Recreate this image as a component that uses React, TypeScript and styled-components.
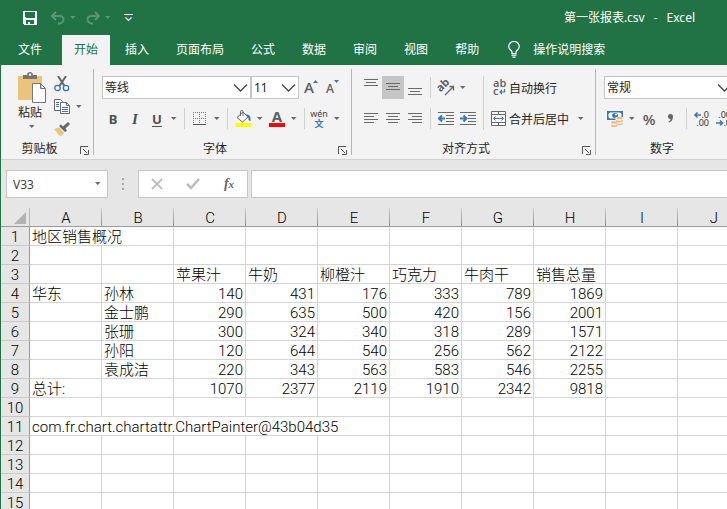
import React from "react";
import styled, { createGlobalStyle } from "styled-components";

const GREEN = "#217346";
const LINE = "#c6c6c6";
const INK = "#262626";
const ICON = "#5f5f5f";
const BLUE = "#3b78b5";
const UI_FONT = `"Noto Sans", "Noto Sans CJK SC", sans-serif`;
const CELL_FONT = `Roboto, "Noto Sans CJK SC", sans-serif`;

const GlobalStyle = createGlobalStyle`
  *, *::before, *::after { box-sizing: border-box; }
  body { margin: 0; background: #fff; font-family: ${UI_FONT}; font-size: 12px; color: ${INK}; }
  button, input, select { font: inherit; color: inherit; margin: 0; }
  svg { display: block; flex: none; }
`;

const Window = styled.div`
  display: flex;
  flex-direction: column;
  height: 100vh;
  overflow: hidden;
  border-left: 1px solid ${GREEN};
`;

/* ---------- Title bar and tabs ---------- */

const TitleBar = styled.header`
  display: flex;
  align-items: center;
  flex: none;
  height: 35px;
  padding: 0 32px 0 18px;
  background: ${GREEN};
  color: #fff;
`;

const BareButton = styled.button`
  display: flex;
  align-items: center;
  justify-content: center;
  border: 0;
  padding: 0;
  background: transparent;
`;

const QuickTools = styled.div`
  display: flex;
  gap: 6px;
`;

const QuickPair = styled.div`
  display: flex;
  color: #579774;
`;

const QuickButton = styled(BareButton)<{ $narrow?: boolean }>`
  width: ${(p) => (p.$narrow ? 7 : 22)}px;
  height: 24px;
`;

const DocumentTitle = styled.h1`
  display: flex;
  gap: 9px;
  margin: 0 0 0 auto;
  font-size: 12px;
  line-height: 16px;
  font-weight: 400;
  white-space: nowrap;
`;

const TabStrip = styled.nav`
  display: flex;
  flex: none;
  gap: 3px;
  height: 30px;
  padding-left: 5px;
  background: ${GREEN};
  color: #fff;
`;

const Tab = styled.button<{ $active?: boolean; $file?: boolean }>`
  flex: none;
  border: 0;
  margin-right: ${(p) => (p.$file ? 5 : 0)}px;
  padding: 0 12px 3px;
  white-space: nowrap;
  background: ${(p) => (p.$active ? "#f3f3f3" : "transparent")};
  color: ${(p) => (p.$active ? GREEN : "#fff")};
`;

const TellMe = styled(BareButton)`
  gap: 13px;
  margin-left: 14px;
  padding-bottom: 2px;
  white-space: nowrap;
  color: #fff;
`;

/* ---------- Ribbon ---------- */

const Ribbon = styled.section`
  display: flex;
  flex: none;
  height: 95px;
  overflow: hidden;
  background: #f3f3f3;
  border-bottom: 1px solid #d2d2d2;
`;

const Group = styled.div`
  display: flex;
  flex: none;
  flex-direction: column;
`;

const GroupDivider = styled.div`
  flex: none;
  width: 1px;
  margin: 4px 0;
  background: #b5b5b5;
`;

const GroupBody = styled.div`
  display: flex;
  height: 65px;
  padding: 11px 8px 0;
`;

const GroupFooter = styled.div`
  display: flex;
  align-items: center;
  margin-top: 10px;
  height: 18px;
`;

const GroupLabel = styled.span`
  flex: 1;
  text-align: center;
  line-height: 18px;
`;

const Launcher = styled(BareButton)`
  width: 15px;
  height: 18px;
  padding: 3px 2px 0 0;
`;

const Rows = styled.div`
  display: flex;
  flex-direction: column;
  gap: 8px;
`;

const Row = styled.div`
  display: flex;
  align-items: center;
  height: 23px;
`;

const Tool = styled(BareButton)<{ $pressed?: boolean }>`
  flex: none;
  width: 22px;
  height: 23px;
  background: ${(p) => (p.$pressed ? "#c5c5c5" : "transparent")};
`;

const LabelledTool = styled(BareButton)`
  flex: none;
  height: 23px;
  gap: 3px;
  padding-left: 3px;
  white-space: nowrap;
`;

const CaretButton = styled(BareButton)<{ $push?: boolean }>`
  flex: none;
  width: 12px;
  height: 23px;
  justify-content: flex-start;
  padding-left: 2px;
  margin-left: ${(p) => (p.$push ? 6 : 0)}px;
`;

const Separator = styled.div<{ $tall?: boolean }>`
  flex: none;
  width: 1px;
  height: ${(p) => (p.$tall ? 54 : 21)}px;
  margin: 0 4px;
  background: #d0d0d0;
`;

const Glyph = styled.span<{ $italic?: boolean; $underline?: boolean }>`
  font-family: ${(p) => (p.$italic ? `"Liberation Serif", serif` : UI_FONT)};
  font-size: ${(p) => (p.$italic ? 15 : 13)}px;
  line-height: 16px;
  font-weight: 700;
  font-style: ${(p) => (p.$italic ? "italic" : "normal")};
  text-decoration: ${(p) => (p.$underline ? "underline" : "none")};
  text-underline-offset: 2px;
  color: #505050;
`;

const PasteColumn = styled.div`
  display: flex;
  flex: none;
  margin-top: -4px;
`;

const PasteButton = styled(BareButton)`
  flex-direction: column;
  align-items: flex-end;
  justify-content: flex-start;
  width: 42px;
  height: 62px;
  padding-right: 5px;
`;

const PasteLabel = styled.span`
  margin: 1px 4px 3px 0;
  line-height: 18px;
`;

const PasteCaret = styled.span`
  margin-right: 11px;
`;

const ClipTools = styled.div`
  display: flex;
  flex-direction: column;
  width: 34px;
`;

const SelectBox = styled.div<{ $width: number }>`
  display: grid;
  flex: none;
  align-items: center;
  width: ${(p) => p.$width}px;
  height: 23px;
  border: 1px solid ${LINE};
  background: #fff;
  & > * { grid-area: 1 / 1; }
  & > svg { justify-self: end; margin-right: 2px; pointer-events: none; }
`;

const SelectField = styled.select`
  appearance: none;
  width: 100%;
  height: 21px;
  border: 0;
  padding: 0 20px 0 2px;
  background: transparent;
`;

/* ---------- Formula bar ---------- */

const FormulaBar = styled.section`
  display: flex;
  flex: none;
  align-items: flex-start;
  height: 48px;
  padding: 10px 0 0 5px;
  background: #e6e6e6;
`;

const NameBox = styled.div`
  display: flex;
  flex: none;
  align-items: center;
  width: 102px;
  height: 28px;
  border: 1px solid ${LINE};
  background: #fff;
`;

const NameInput = styled.input`
  flex: 1;
  min-width: 0;
  border: 0;
  padding: 0 0 0 6px;
  background: transparent;
  color: #444;
`;

const NameCaret = styled(BareButton)`
  width: 18px;
  height: 26px;
  padding-right: 2px;
`;

const Grip = styled.div`
  display: flex;
  flex: none;
  flex-direction: column;
  align-items: center;
  justify-content: center;
  gap: 3px;
  width: 30px;
  height: 28px;
`;

const GripDot = styled.span`
  width: 2px;
  height: 2px;
  background: #a6a6a6;
`;

const FormulaButtons = styled.div`
  display: flex;
  flex: none;
  width: 110px;
  height: 28px;
  margin-right: 3px;
  border: 1px solid ${LINE};
  background: #fff;
`;

const FormulaButton = styled(BareButton)`
  flex: 1;
`;

const FormulaInput = styled.input`
  flex: 1;
  min-width: 0;
  height: 28px;
  border: 1px solid ${LINE};
  border-right: 0;
  padding: 0 6px;
  background: #fff;
`;

/* ---------- Sheet ---------- */

const SheetArea = styled.main`
  flex: 1;
  min-height: 0;
  overflow: hidden;
  background: #fff;
`;

const Sheet = styled.table`
  table-layout: fixed;
  width: 749px;
  border-collapse: separate;
  border-spacing: 0;
  font-family: ${CELL_FONT};
  font-size: 15px;
  font-weight: 300;
  line-height: 15px;
  color: #000;
`;

const HeadCol = styled.col`
  width: 29px;
`;

const DataCol = styled.col`
  width: 72px;
`;

const SheetRow = styled.tr`
  height: 19px;
`;

const Corner = styled.td`
  height: 19px;
  padding: 0;
  background: #e6e6e6;
  border-bottom: 1px solid #9b9b9b;
  border-right: 1px solid #b5b5b5;
`;

const CornerMark = styled.svg`
  margin: 2px 3px 0 auto;
`;

const ColumnHead = styled.th`
  height: 19px;
  padding: 3px 0 0;
  font-weight: 300;
  text-align: center;
  background: linear-gradient(#c8c8c8, #8f8f8f) right / 1px 100% no-repeat #e6e6e6;
  border-bottom: 1px solid #9b9b9b;
`;

const RowHead = styled.th`
  height: 19px;
  padding: 3px 0 0;
  font-weight: 300;
  text-align: center;
  background: #e6e6e6;
  border-right: 1px solid #9b9b9b;
  border-bottom: 1px solid #c9c9c9;
`;

const Cell = styled.td<{ $numeric?: boolean }>`
  height: 19px;
  padding: 3px 2px 0;
  white-space: nowrap;
  text-align: ${(p) => (p.$numeric ? "right" : "left")};
  border-right: 1px solid #d4d4d4;
  border-bottom: 1px solid #d4d4d4;
`;

/* ---------- Icons ---------- */

const Caret = ({ color = "#6a6a6a" }: { color?: string }) => (
  <svg width="7" height="4" viewBox="0 0 7 4">
    <path d="M1 0h5.500L3.750 3z" fill={color} />
  </svg>
);

const Chevron = () => (
  <svg width="15" height="10" viewBox="0 0 15 10" fill="none" stroke="#444" strokeWidth="1.300">
    <path d="M1 1.500l6.500 6.500L14 1.500" />
  </svg>
);

const LauncherIcon = () => (
  <svg width="9" height="9" viewBox="0 0 9 9" fill="none" stroke="#555">
    <path d="M.5 8V.5H8M3 3l4 4M8.500 4v4.500H4" />
  </svg>
);

const SaveIcon = () => (
  <svg width="14" height="14" viewBox="0 0 14 14" shapeRendering="crispEdges">
    <path fill="#fff" fillRule="evenodd" d="M0 0h14v14H1l-1-1zM2 1v5l1 1h8l1-1V1zM3 9v4h2v-2h2v2h4V9z" />
  </svg>
);

const UndoIcon = () => (
  <svg width="16" height="14" viewBox="0 0 16 14" fill="none" stroke="currentColor" strokeWidth="2">
    <path d="M6 1L2 5l4 4M2 5h7.500c2.500 0 4 1.500 4 3.500S12 12 9.500 12.500H8" />
  </svg>
);

const RedoIcon = () => (
  <svg width="16" height="14" viewBox="0 0 16 14" fill="none" stroke="currentColor" strokeWidth="2">
    <path d="M10 1l4 4-4 4M14 5H6.500C4 5 2.500 6.500 2.500 8.500S4 12 6.500 12.500H8" />
  </svg>
);

const CustomizeIcon = () => (
  <svg width="9" height="8" viewBox="0 0 9 8" fill="none" stroke="#fff">
    <path d="M0 .5h9M1.500 3.500l3 3 3-3" strokeWidth="1.200" />
  </svg>
);

const BulbIcon = () => (
  <svg width="12" height="17" viewBox="0 0 12 17" fill="none" stroke="#fff" strokeWidth="1.200">
    <path d="M4 12.500V11C3.500 9 .7 8.500 .7 5.500a5.300 5 0 0 1 10.600 0C11.300 8.500 8.500 9 8 11v1.500zM3.500 14.200h5M4.500 16.200h3" />
  </svg>
);

const PasteIcon = () => (
  <svg width="28" height="31" viewBox="0 0 28 31">
    <path fill="#ecc37c" d="M0 4h24v24H0z" />
    <path fill="#757575" d="M5 3h4c0-4 6-4 6 0h4v4H5z" />
    <circle cx="12" cy="2.800" r="1.200" fill="#f3f3f3" />
    <path fill="#fff" stroke="#777" d="M14.500 11.500h8l5 5v14h-13zM22.500 11.500v5h5" />
  </svg>
);

const CutIcon = () => (
  <svg width="16" height="16" viewBox="0 0 16 16" fill="none">
    <path d="M4 0l6.500 10M12 0L5.500 10" stroke="#666" strokeWidth="2" />
    <circle cx="3.500" cy="12" r="2.700" stroke={BLUE} strokeWidth="1.300" />
    <circle cx="12" cy="12" r="2.700" stroke={BLUE} strokeWidth="1.300" />
  </svg>
);

const CopyIcon = () => (
  <svg width="16" height="15" viewBox="0 0 16 15" fill="#fff" stroke="#6a6a6a">
    <path d="M.5 .5h6l2 2v9h-8z" />
    <path d="M2 3.500h3M2 5.500h3M2 7.500h3" stroke={BLUE} />
    <path d="M6.500 3.500h6l3 3v8h-9zM12.500 3.500v3h3" />
    <path d="M8 8.500h6M8 10.500h6M8 12.500h6" stroke={BLUE} />
  </svg>
);

const BrushIcon = () => (
  <svg width="16" height="15" viewBox="0 0 16 15">
    <path fill="#ecc37c" d="M0 7l5-1.500 5 5L7 14.500 5 13z" />
    <path fill="#666" d="M5 4l2-1.500 2 2L14 0l2 2-4.500 4.500 1.500 2L11 10z" />
  </svg>
);

const BordersIcon = () => (
  <svg width="14" height="14" viewBox="0 0 14 14" stroke="#777" fill="none" shapeRendering="crispEdges">
    <path strokeDasharray="1 1" d="M0 .5h13M.5 0v13M12.500 0v13M6.500 0v13M0 6.500h13" />
    <path stroke="#555" d="M0 12.500h13" />
  </svg>
);

const FillIcon = () => (
  <svg width="16" height="17" viewBox="0 0 16 17">
    <path fill="#fff" stroke="#666" d="M2 7.500L8 2l5 5-5.500 5z" />
    <path fill="none" stroke="#666" d="M5.500 6V1.500c0-1.500 2.500-1.500 2.500 0V6" />
    <path fill={BLUE} d="M10.500 4.500c4-.5 5.500 1.500 5 6.500-1.500 0-2.500-1-2-3z" />
    <path fill="#ff0" d="M0 13h16v4H0z" />
  </svg>
);

const FontColorIcon = () => (
  <svg width="16" height="23" viewBox="0 0 16 23">
    <text x="8" y="15" textAnchor="middle" fontFamily="Noto Sans" fontWeight="700" fontSize="15" fill={ICON}>A</text>
    <path fill="#f00" d="M0 16h16v4H0z" />
  </svg>
);

const GrowIcon = ({ shrink = false }: { shrink?: boolean }) => (
  <svg width="16" height="23" viewBox="0 0 16 23" overflow="visible">
    <text x="2" y="17" fontFamily="Open Sans" fontWeight="600" fontSize={shrink ? 12 : 15} fill={ICON}>A</text>
    <path fill={BLUE} d={shrink ? "M10 4h5l-2.500 3z" : "M11 7h5l-2.500-3z"} />
  </svg>
);

const PhoneticIcon = () => (
  <svg width="20" height="23" viewBox="0 0 20 23">
    <text x="9" y="10" textAnchor="middle" fontFamily="Noto Sans" fontSize="9" fill="#444">wén</text>
    <text x="9" y="20" textAnchor="middle" fontFamily="Noto Sans CJK SC" fontWeight="700" fontSize="9" fill={BLUE}>文</text>
  </svg>
);

const Lines = ({ d, height = 17 }: { d: string; height?: number }) => (
  <svg width="14" height={height} viewBox={`0 0 14 ${height}`} stroke="#6a6a6a" fill="none">
    <path d={d} />
  </svg>
);

const OrientationIcon = () => (
  <svg width="17" height="16" viewBox="0 0 17 16" overflow="visible">
    <text x="2" y="11" transform="rotate(-45 4 11)" fontFamily="Noto Sans" fontWeight="700" fontSize="11" fill={ICON}>ab</text>
    <path fill="none" stroke="#666" strokeWidth="1.300" d="M7 15l8.500-8.500M11.500 6.500h4v4" />
  </svg>
);

const IndentIcon = ({ increase = false }: { increase?: boolean }) => (
  <svg width="16" height="13" viewBox="0 0 16 13" fill="none">
    <path stroke="#6a6a6a" d="M0 .5h16M8 3.500h8M8 6.500h8M8 9.500h8M0 12.500h16" />
    <path stroke={BLUE} strokeWidth="2" d={increase ? "M0 6.500h6M3.500 3.500l3 3-3 3" : "M1 6.500h6M4 3.500l-3 3 3 3"} />
  </svg>
);

const WrapIcon = () => (
  <svg width="15" height="19" viewBox="0 0 15 19" overflow="visible">
    <text x="2" y="9" fontFamily="Open Sans" fontWeight="600" fontSize="11" fill={ICON}>ab</text>
    <text x="2" y="17" fontFamily="Open Sans" fontWeight="600" fontSize="11" fill={ICON}>c</text>
    <path fill="none" stroke={BLUE} strokeWidth="1.200" d="M13.500 11v3H9M11 12l-2 2 2 2" />
  </svg>
);

const MergeIcon = () => (
  <svg width="15" height="15" viewBox="0 0 15 15" fill="#fff" stroke="#666">
    <path d="M.5 .5h14v14H.5zM.5 3.500h14M.5 11.500h14M7.500 .5v3M7.500 11.500v3" />
    <path fill="none" stroke={BLUE} d="M2.500 7.500h10M4.500 5.500l-2 2 2 2M10.500 5.500l2 2-2 2" />
  </svg>
);

const CurrencyIcon = () => (
  <svg width="16" height="17" viewBox="0 0 16 17">
    <path fill={BLUE} d="M0 1h16v9H0z" />
    <path fill="#fff" d="M3 2.500h10l1.500 1.500v3L13 8.500H3L1.500 7V4z" />
    <ellipse cx="8" cy="5.500" rx="3" ry="2.500" fill={BLUE} />
    <circle cx="9" cy="4.500" r="1" fill="#fff" />
    <path fill="#f3f3f3" d="M8.500 7H16v10H3v-6h5.500z" />
    <g fill="#ecbd7e">
      <ellipse cx="12.500" cy="8" rx="3.300" ry="1.300" />
      <path d="M9 10c1 1 6 1 7 0v1.500c-1 1.300-6 1.300-7 0zM9 13c1 1 6 1 7 0v1c-1 1.300-6 1.300-7 0z" />
      <ellipse cx="7" cy="12.500" rx="3" ry="1.200" />
      <path d="M4 14.500c1 1 5 1 6.500 0V16c-1.500 1.300-5.500 1.300-6.500 0z" />
    </g>
  </svg>
);

const DecimalIcon = ({ decrease = false }: { decrease?: boolean }) => (
  <svg width="16" height="18" viewBox="0 0 16 18" overflow="visible">
    <g fontFamily="Noto Sans" fontSize="9" fill="#333">
      <text x="15" y="8" textAnchor="end">{decrease ? ".00" : ".0"}</text>
      <text x="15" y="16" textAnchor="end">{decrease ? ".0" : ".00"}</text>
    </g>
    <path
      fill="none"
      stroke={BLUE}
      strokeWidth="1.600"
      d={decrease ? "M0 13h6M4 10.500L6.500 13 4 15.500" : "M1 5h6M3.500 2.500L1 5l2.500 2.500"}
    />
  </svg>
);

const CommaIcon = () => (
  <svg width="6" height="9" viewBox="0 0 6 9">
    <path fill="#666" d="M0 2.500A2.500 2.500 0 0 1 5 2.500C5 6 3.500 7.500 1 8.500L.5 7.500C2 6.800 2.500 6 2.500 5A2.500 2.500 0 0 1 0 2.500z" />
  </svg>
);

const CancelIcon = () => (
  <svg width="12" height="12" viewBox="0 0 12 12" stroke="#bdbdbd" strokeWidth="1.800">
    <path d="M1 1l10 10M11 1L1 11" />
  </svg>
);

const EnterIcon = () => (
  <svg width="14" height="12" viewBox="0 0 14 12" fill="none" stroke="#bdbdbd" strokeWidth="2.500">
    <path d="M1 6l4 4 8-9" />
  </svg>
);

const FormulaMark = styled.span`
  font-family: "Liberation Serif", serif;
  font-size: 14px;
  line-height: 18px;
  font-weight: 700;
  font-style: italic;
  color: #666;
`;

const FormulaMarkSmall = styled.small`
  font-size: 11px;
`;

/* ---------- Data ---------- */

const TABS = ["文件", "开始", "插入", "页面布局", "公式", "数据", "审阅", "视图", "帮助"];
const COLUMNS = ["A", "B", "C", "D", "E", "F", "G", "H", "I", "J"];

type Value = string | number;

const ROWS: Record<number, Value[]> = {
  1: ["地区销售概况"],
  3: ["", "", "苹果汁", "牛奶", "柳橙汁", "巧克力", "牛肉干", "销售总量"],
  4: ["华东", "孙林", 140, 431, 176, 333, 789, 1869],
  5: ["", "金士鹏", 290, 635, 500, 420, 156, 2001],
  6: ["", "张珊", 300, 324, 340, 318, 289, 1571],
  7: ["", "孙阳", 120, 644, 540, 256, 562, 2122],
  8: ["", "袁成洁", 220, 343, 563, 583, 546, 2255],
  9: ["总计:", "", 1070, 2377, 2119, 1910, 2342, 9818],
  11: ["com.fr.chart.chartattr.ChartPainter@43b04d35"],
};

/* How many columns a long first cell runs across. */
const SPANS: Record<number, number> = { 1: 2, 11: 5 };
const ROW_NUMBERS = Array.from({ length: 15 }, (_, i) => i + 1);

const SplitCaret = ({ label, push }: { label: string; push?: boolean }) => (
  <CaretButton aria-label={label} $push={push}>
    <Caret />
  </CaretButton>
);

const Footer = ({ label }: { label: string }) => (
  <GroupFooter>
    <GroupLabel>{label}</GroupLabel>
    <Launcher aria-label={`${label}设置`}>
      <LauncherIcon />
    </Launcher>
  </GroupFooter>
);

const Picker = ({ label, value, width }: { label: string; value: string; width: number }) => (
  <SelectBox $width={width}>
    <SelectField aria-label={label} defaultValue={value}>
      <option>{value}</option>
    </SelectField>
    <Chevron />
  </SelectBox>
);

const NumberGlyph = styled.span`
  font-size: 15px;
  line-height: 20px;
  font-weight: 500;
  color: #505050;
`;

const ClipboardGroup = () => (
  <Group>
    <GroupBody>
      <PasteColumn>
        <PasteButton>
          <PasteIcon />
          <PasteLabel>粘贴</PasteLabel>
          <PasteCaret><Caret /></PasteCaret>
        </PasteButton>
        <ClipTools>
          <Tool aria-label="剪切"><CutIcon /></Tool>
          <Row>
            <Tool aria-label="复制"><CopyIcon /></Tool>
            <SplitCaret label="复制选项" />
          </Row>
          <Tool aria-label="格式刷"><BrushIcon /></Tool>
        </ClipTools>
      </PasteColumn>
    </GroupBody>
    <Footer label="剪贴板" />
  </Group>
);

const FontGroup = () => (
  <Group>
    <GroupBody>
      <Rows>
        <Row>
          <Picker label="字体" value="等线" width={149} />
          <Picker label="字号" value="11" width={48} />
          <Tool aria-label="增大字号"><GrowIcon /></Tool>
          <Tool aria-label="减小字号"><GrowIcon shrink /></Tool>
        </Row>
        <Row>
          <Tool aria-label="加粗"><Glyph>B</Glyph></Tool>
          <Tool aria-label="倾斜"><Glyph $italic>I</Glyph></Tool>
          <Tool aria-label="下划线"><Glyph $underline>U</Glyph></Tool>
          <SplitCaret label="下划线选项" />
          <Separator />
          <Tool aria-label="边框"><BordersIcon /></Tool>
          <SplitCaret label="边框选项" />
          <Separator />
          <Tool aria-label="填充颜色"><FillIcon /></Tool>
          <SplitCaret label="填充颜色选项" />
          <Tool aria-label="字体颜色"><FontColorIcon /></Tool>
          <SplitCaret label="字体颜色选项" />
          <Separator />
          <Tool aria-label="拼音"><PhoneticIcon /></Tool>
          <SplitCaret label="拼音选项" />
        </Row>
      </Rows>
    </GroupBody>
    <Footer label="字体" />
  </Group>
);

const AlignmentGroup = () => (
  <Group>
    <GroupBody>
      <Rows>
        <Row>
          <Tool aria-label="顶端对齐"><Lines d="M0 .5h14M2 3.500h10M0 6.500h14" /></Tool>
          <Tool aria-label="垂直居中" aria-pressed="true" $pressed><Lines d="M0 4.500h14M2 7.500h10M0 10.500h14" /></Tool>
          <Tool aria-label="底端对齐"><Lines d="M0 9.500h14M2 12.500h10M0 15.500h14" /></Tool>
          <Separator />
          <Tool aria-label="方向"><OrientationIcon /></Tool>
          <SplitCaret label="方向选项" />
        </Row>
        <Row>
          <Tool aria-label="左对齐"><Lines height={11} d="M0 .5h14M0 3.500h10M0 6.500h14M0 9.500h10" /></Tool>
          <Tool aria-label="居中"><Lines height={11} d="M0 .5h14M2 3.500h10M0 6.500h14M2 9.500h10" /></Tool>
          <Tool aria-label="右对齐"><Lines height={11} d="M0 .5h14M4 3.500h10M0 6.500h14M4 9.500h10" /></Tool>
          <Separator />
          <Tool aria-label="减少缩进量"><IndentIcon /></Tool>
          <Tool aria-label="增加缩进量"><IndentIcon increase /></Tool>
        </Row>
      </Rows>
      <Separator $tall />
      <Rows>
        <Row>
          <LabelledTool><WrapIcon />自动换行</LabelledTool>
        </Row>
        <Row>
          <LabelledTool><MergeIcon />合并后居中</LabelledTool>
          <SplitCaret label="合并选项" push />
        </Row>
      </Rows>
    </GroupBody>
    <Footer label="对齐方式" />
  </Group>
);

const NumberGroup = () => (
  <Group>
    <GroupBody>
      <Rows>
        <Row>
          <Picker label="数字格式" value="常规" width={131} />
        </Row>
        <Row>
          <Tool aria-label="会计数字格式"><CurrencyIcon /></Tool>
          <SplitCaret label="会计数字格式选项" />
          <Tool aria-label="百分比样式"><NumberGlyph>%</NumberGlyph></Tool>
          <Tool aria-label="千位分隔样式"><CommaIcon /></Tool>
          <Separator />
          <Tool aria-label="增加小数位数"><DecimalIcon /></Tool>
          <Tool aria-label="减少小数位数"><DecimalIcon decrease /></Tool>
        </Row>
      </Rows>
    </GroupBody>
    <Footer label="数字" />
  </Group>
);

const DataRow = ({ n }: { n: number }) => {
  const values = ROWS[n] ?? [];
  const span = SPANS[n] ?? 1;
  return (
    <SheetRow>
      <RowHead scope="row">{n}</RowHead>
      <Cell colSpan={span}>{values[0]}</Cell>
      {COLUMNS.slice(span).map((name, i) => {
        const value = values[i + span];
        return (
          <Cell key={name} $numeric={typeof value === "number"}>
            {value}
          </Cell>
        );
      })}
    </SheetRow>
  );
};

export default function App() {
  return (
    <Window>
      <GlobalStyle />
      <TitleBar>
        <QuickTools>
          <QuickButton aria-label="保存"><SaveIcon /></QuickButton>
          <QuickPair>
            <QuickButton aria-label="撤消"><UndoIcon /></QuickButton>
            <QuickButton $narrow aria-label="撤消列表"><Caret color="currentColor" /></QuickButton>
          </QuickPair>
          <QuickPair>
            <QuickButton aria-label="恢复"><RedoIcon /></QuickButton>
            <QuickButton $narrow aria-label="恢复列表"><Caret color="currentColor" /></QuickButton>
          </QuickPair>
          <QuickButton aria-label="自定义快速访问工具栏"><CustomizeIcon /></QuickButton>
        </QuickTools>
        <DocumentTitle>
          <span>第一张报表.csv</span>
          <span>-</span>
          <span>Excel</span>
        </DocumentTitle>
      </TitleBar>
      <TabStrip>
        {TABS.map((name) => (
          <Tab key={name} $active={name === "开始"} $file={name === "文件"}>
            {name}
          </Tab>
        ))}
        <TellMe><BulbIcon />操作说明搜索</TellMe>
      </TabStrip>
      <Ribbon>
        <ClipboardGroup />
        <GroupDivider />
        <FontGroup />
        <GroupDivider />
        <AlignmentGroup />
        <GroupDivider />
        <NumberGroup />
      </Ribbon>
      <FormulaBar>
        <NameBox>
          <NameInput aria-label="名称框" defaultValue="V33" />
          <NameCaret aria-label="名称列表"><Caret /></NameCaret>
        </NameBox>
        <Grip><GripDot /><GripDot /><GripDot /></Grip>
        <FormulaButtons>
          <FormulaButton aria-label="取消"><CancelIcon /></FormulaButton>
          <FormulaButton aria-label="输入"><EnterIcon /></FormulaButton>
          <FormulaButton aria-label="插入函数">
            <FormulaMark>f<FormulaMarkSmall>x</FormulaMarkSmall></FormulaMark>
          </FormulaButton>
        </FormulaButtons>
        <FormulaInput aria-label="编辑栏" />
      </FormulaBar>
      <SheetArea>
        <Sheet>
          <colgroup>
            <HeadCol />
            {COLUMNS.map((name) => <DataCol key={name} />)}
          </colgroup>
          <thead>
            <SheetRow>
              <Corner>
                <CornerMark width="12" height="12" viewBox="0 0 12 12">
                  <path d="M12 0v12H0z" fill="#b2b2b2" />
                </CornerMark>
              </Corner>
              {COLUMNS.map((name) => (
                <ColumnHead key={name} scope="col">{name}</ColumnHead>
              ))}
            </SheetRow>
          </thead>
          <tbody>
            {ROW_NUMBERS.map((n) => <DataRow key={n} n={n} />)}
          </tbody>
        </Sheet>
      </SheetArea>
    </Window>
  );
}
